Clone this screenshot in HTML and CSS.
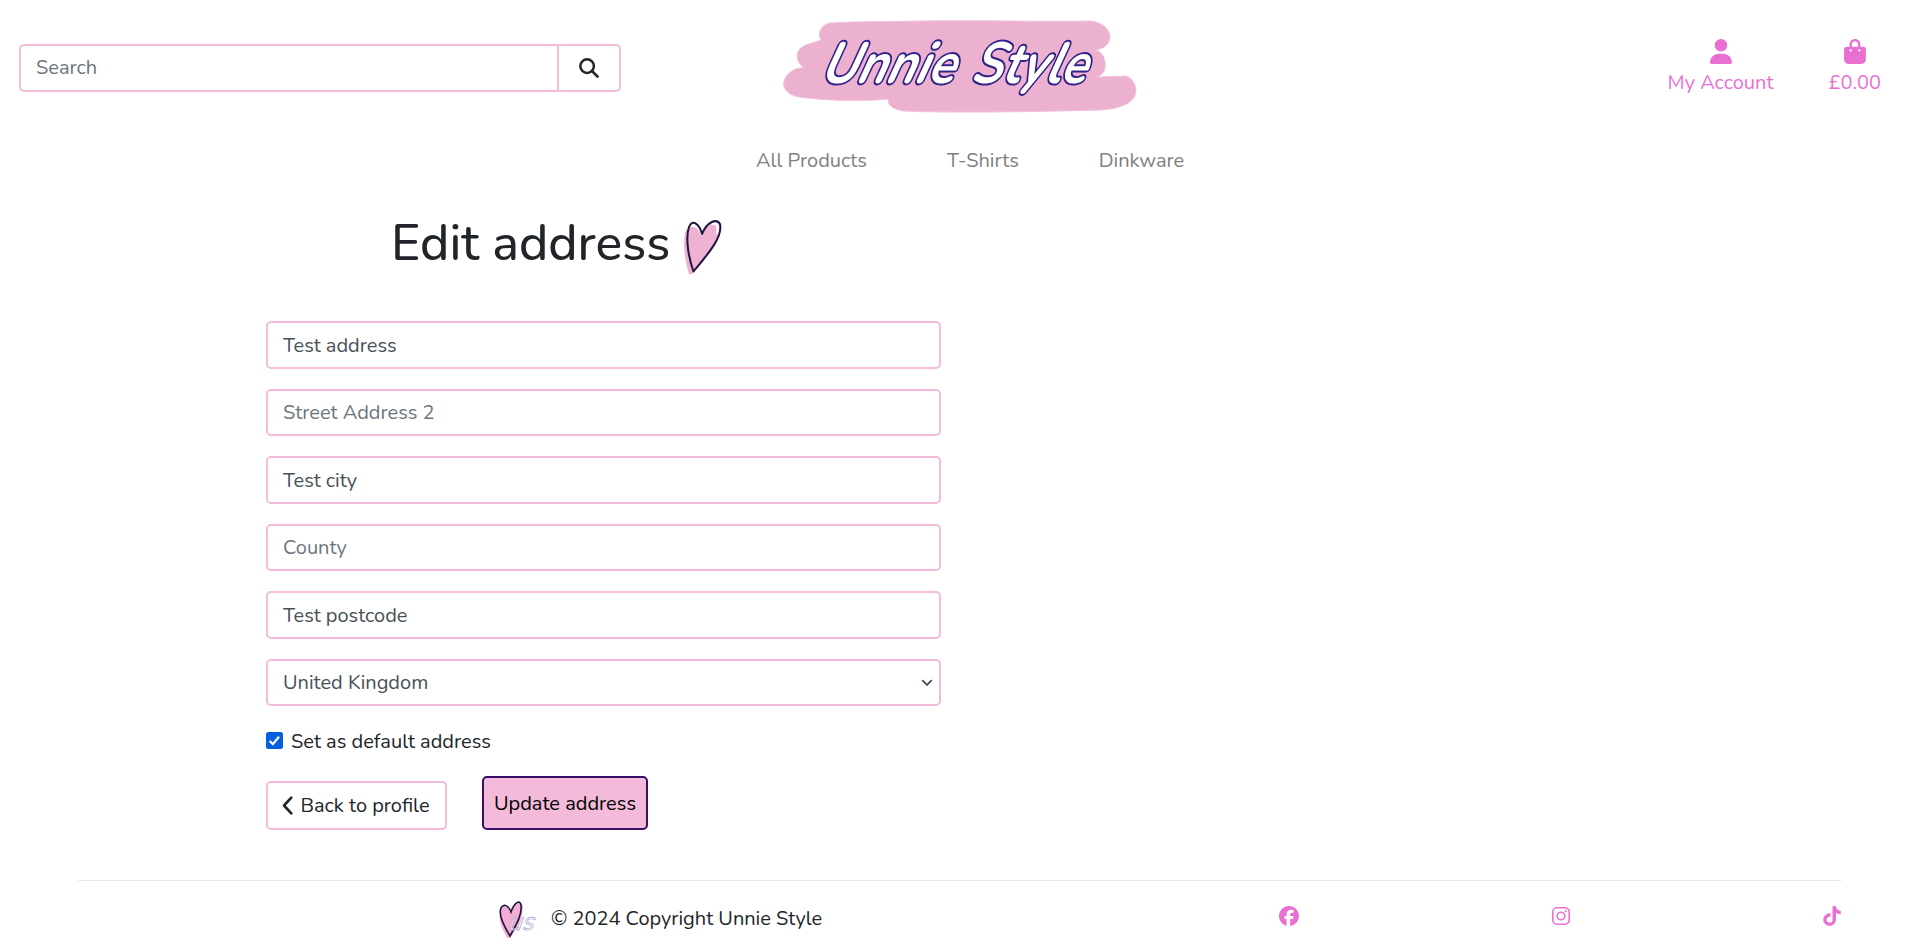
FILE: index.html
```html
<!DOCTYPE html>
<html lang="en">
<head>
<meta charset="utf-8">
<title>Unnie Style</title>
<link rel="stylesheet" href="styles.css">
</head>
<body>
<header class="header">
  <form class="search">
    <input class="search-input" type="text" placeholder="Search" aria-label="Search">
    <button class="search-button" type="button" aria-label="Submit search">
      <svg width="20" height="20" viewBox="0 0 20 20"><circle cx="8.1" cy="8.1" r="6.8" fill="none" stroke="currentColor" stroke-width="2.500"/><path d="M13 13l5.600 5.600" stroke="currentColor" stroke-width="2.700" stroke-linecap="round"/></svg>
    </button>
  </form>
  <a class="logo" href="#">
    <svg width="380" height="130" viewBox="0 0 380 130">
      <path class="brush" d="M60 23C90 21 120 22 150 21C210 20 270 22 320 21C333 22 340 30 340 37C339 46 332 49 326 50C334 53 336 61 335 68C334 73 330 76 327 77L356 76C364 79 366 86 366 92C364 103 351 109 330 110C260 112 180 113 133 111C122 109 116 104 119 99C87 102 50 100 29 97C17 95 12 87 14 81C17 71 28 67 34 68C26 62 26 54 29 50C33 44 44 43 51 40C47 33 51 25 60 23Z"/>
      <text class="script" transform="translate(50 83) skewX(-18)" textLength="134" lengthAdjust="spacingAndGlyphs">Unnie</text>
      <text class="script" transform="translate(201 83) skewX(-18)" textLength="115" lengthAdjust="spacingAndGlyphs">Style</text>
    </svg>
  </a>
  <div class="account">
    <a class="account-link" href="#">
      <svg width="22" height="25" viewBox="0 0 448 512"><path fill="currentColor" d="M224 256A128 128 0 1 0 224 0a128 128 0 1 0 0 256zm-45.700 48C79.800 304 0 383.800 0 482.300C0 498.700 13.300 512 29.700 512H418.300c16.400 0 29.700-13.300 29.700-29.700C448 383.800 368.200 304 269.700 304H178.300z"/></svg>
      <span>My Account</span>
    </a>
    <a class="account-link" href="#">
      <svg width="22" height="25" viewBox="0 0 448 512"><path fill="currentColor" d="M160 112c0-35.300 28.700-64 64-64s64 28.700 64 64v48H160V112zm-48 48H48c-26.500 0-48 21.500-48 48V416c0 53 43 96 96 96H352c53 0 96-43 96-96V208c0-26.500-21.500-48-48-48H336V112C336 50.100 285.900 0 224 0S112 50.100 112 112v48zm24 48a24 24 0 1 1 0 48 24 24 0 1 1 0-48zm152 24a24 24 0 1 1 48 0 24 24 0 1 1-48 0z"/></svg>
      <span>£0.00</span>
    </a>
  </div>
</header>
<nav class="nav">
  <a href="#">All Products</a>
  <a href="#">T-Shirts</a>
  <a href="#">Dinkware</a>
</nav>
<main class="main">
  <h1 class="title"><span>Edit address</span>
    <svg class="heart" width="40" height="58" viewBox="0 0 40 58"><path fill="#efb2d3" d="M3 11C8 5 15 8 19 16C24 5 34 1 37 7C38 21 21 39 9 55L6 55C2 43-1 22 3 11Z"/><path fill="none" stroke="#fff" stroke-width="2.500" d="M9 6C13 4 17 10 19 16M29 5C34 3 36 8 34 15"/><path fill="none" stroke="#211442" stroke-width="2" stroke-linejoin="round" d="M10.500 52.500C6 40 2 20 6 8C9 0 16 4 19 15C24 3 33-1 37 5C40 18 25 35 10.500 52.500Z"/></svg>
  </h1>
  <form class="form">
    <input class="field" type="text" value="Test address">
    <input class="field empty" type="text" placeholder="Street Address 2">
    <input class="field" type="text" value="Test city">
    <input class="field empty" type="text" placeholder="County">
    <input class="field" type="text" value="Test postcode">
    <div class="field select"><span>United Kingdom</span>
      <svg width="12" height="8" viewBox="0 0 12 8"><path d="M1.200 1.200L6 6L10.800 1.200" fill="none" stroke="currentColor" stroke-width="1.800"/></svg>
    </div>
    <label class="check">
      <svg width="17" height="17" viewBox="0 0 17 17"><rect width="17" height="17" rx="2.500" fill="#0560df"/><path d="M3.700 9L6.800 12.200L13 4.700" fill="none" stroke="#fff" stroke-width="2.200"/></svg>
      <span class="check-text">Set as default address</span>
    </label>
    <div class="actions">
      <a class="button back" href="#">
        <svg width="11" height="19" viewBox="0 0 11 19"><path d="M9.300 1.700L2 9.500L9.300 17.300" fill="none" stroke="currentColor" stroke-width="2.700" stroke-linecap="round" stroke-linejoin="round"/></svg>
        <span>Back to profile</span>
      </a>
      <button class="button update" type="button">Update address</button>
    </div>
  </form>
</main>
<footer class="footer">
  <div class="copyright">
    <svg class="footer-logo" width="40" height="40" viewBox="0 0 40 40"><path fill="#f3aed2" d="M3 9C8 4 12 7 13 12C17 3 23 1 25 6C25 18 18 29 12 38L10 39C4 30-1 17 3 9Z"/><path fill="none" stroke="#211442" stroke-width="1.600" d="M12 36C7 28 0 15 3 8C6 3 11 6 13 12C16 3 22-1 23 5C24 14 20 22 12 36Z"/><text class="mark" transform="translate(10 29.500) skewX(-12)" textLength="26" lengthAdjust="spacingAndGlyphs">us</text></svg>
    <span>© 2024 Copyright Unnie Style</span>
  </div>
  <div class="social">
    <a href="#" aria-label="Facebook"><svg width="20" height="20" viewBox="0 0 512 512"><path fill="currentColor" d="M512 256C512 114.600 397.400 0 256 0S0 114.600 0 256C0 376 82.700 476.800 194.200 504.500V334.200H141.400V256h52.800V222.300c0-87.100 39.400-127.500 125-127.500c16.200 0 44.200 3.200 55.700 6.400V172c-6-.6-16.500-1-29.600-1c-42 0-58.200 15.900-58.200 57.200V256h83.600l-14.400 78.200H287V510.100C413.800 494.800 512 386.900 512 256z"/></svg></a>
    <a href="#" aria-label="Instagram"><svg class="instagram" width="18" height="18" viewBox="0 0 18 18" fill="none" stroke="currentColor"><rect x=".8" y=".8" width="16.400" height="16.400" rx="4.200" stroke-width="1.600"/><circle cx="9" cy="9" r="3.800" stroke-width="1.600"/><circle cx="13.700" cy="4.300" r="1.050" fill="currentColor" stroke="none"/></svg></a>
    <a href="#" aria-label="TikTok"><svg width="18" height="20" viewBox="0 0 448 512"><path fill="currentColor" d="M448 209.900a210.100 210.100 0 0 1-122.800-39.300V349.400A162.600 162.600 0 1 1 185 188.300V278.200a74.600 74.600 0 1 0 52.200 71.200V0h88a121.200 121.200 0 0 0 1.900 22.200 122.200 122.200 0 0 0 53.900 80.200A121.400 121.400 0 0 0 448 122.500z"/></svg></a>
  </div>
</footer>
</body>
</html>
```
FILE: styles.css
```css
* { box-sizing: border-box; }
body { margin: 0; background: #fff; color: #212529; font-family: Nunito, Lato, sans-serif; font-size: 20px; line-height: 30px; }
a { color: inherit; text-decoration: none; }
svg { display: block; flex: none; overflow: visible; }

.header { display: grid; grid-template-columns: 770px 380px 1fr; height: 130px; align-items: start; }
.search { display: flex; width: 602px; height: 48px; margin: 44px 0 0 19px; }
.search-input { flex: 1; min-width: 0; padding: 0 15px; border: 2px solid #f4bbdb; border-radius: 5px 0 0 5px; font: inherit; color: #495057; }
.search-input::placeholder, .field::placeholder { color: #6c757d; opacity: 1; }
.search-button { display: flex; align-items: center; justify-content: center; width: 64px; margin-left: -2px; padding: 0; border: 2px solid #f4bbdb; border-radius: 0 5px 5px 0; background: #fff; color: #212529; }
.brush { fill: #edb1d0; stroke: #f2c3dc; stroke-width: 1; }
.script { font-family: Nunito, Lato, sans-serif; font-style: italic; font-weight: 700; font-size: 58px; fill: #fff; stroke: #30218b; stroke-width: 4px; paint-order: stroke; stroke-linejoin: round; }
.account { display: flex; justify-content: flex-end; gap: 55px; padding: 39px 39px 0 0; color: #e870d3; }
.account-link { display: flex; flex-direction: column; align-items: center; gap: 4px; white-space: nowrap; }

.nav { display: flex; gap: 80px; padding: 16px 0 0 756px; height: 60px; color: #808080; white-space: nowrap; }
.main { padding: 22px 0 0 266px; }
.title { display: flex; align-items: flex-start; gap: 12px; height: 109.400px; margin: 0; padding-left: 125px; font-size: 50px; font-weight: 500; line-height: 64px; white-space: nowrap; }
.heart { margin-top: 7px; }
.form { display: flex; flex-direction: column; gap: 20px; width: 675px; }
.field { display: block; width: 100%; height: 47.500px; padding: 1px 15px 0; border: 2px solid #f4bbdb; border-radius: 5px; background: #fff; color: #495057; font: inherit; }
.empty { padding-top: 0; }
.select { display: flex; align-items: center; justify-content: space-between; padding-right: 6px; }
.check { display: flex; align-items: center; gap: 8px; height: 30px; }
.check svg { margin-top: -1px; }
.check-text { padding-top: 1px; }
.actions { display: flex; align-items: flex-end; gap: 35px; height: 54px; }
.button { display: flex; align-items: center; justify-content: center; border-radius: 5px; font: inherit; white-space: nowrap; }
.back { gap: 7px; width: 181px; height: 49px; padding-right: 1px; border: 2px solid #f4bbdb; }
.update { width: 166px; height: 54px; padding: 1px 0 0; border: 2px solid #3a0f6b; background: #f3bada; color: #000; }

.footer { display: flex; justify-content: space-between; width: 1763px; margin: 50px 0 0 78px; padding-top: 19px; border-top: 1px solid #e8e8e8; }
.copyright { display: flex; align-items: center; gap: 13px; height: 38px; margin-left: 420px; white-space: nowrap; }
.footer-logo { margin-top: 2px; }
.mark { font-family: Nunito, Lato, sans-serif; font-size: 26px; font-style: italic; fill: #ffffff90; stroke: #a7a0ca; stroke-width: .7px; }
.social { display: flex; justify-content: space-between; width: 562px; padding-top: 6px; color: #e870d3; }
.instagram { margin-top: 1px; }
```
